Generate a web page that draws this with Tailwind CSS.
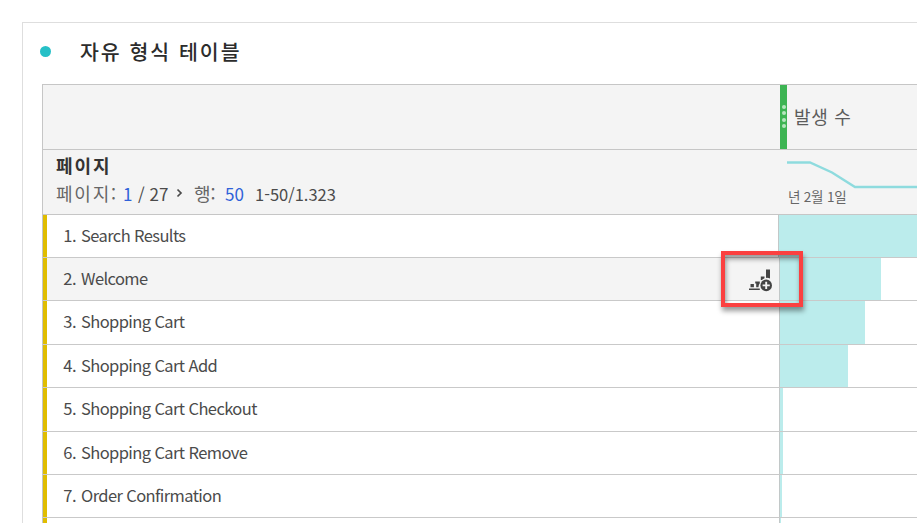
<!DOCTYPE html>
<html lang="ko">
<head>
<meta charset="utf-8">
<title>자유 형식 테이블</title>
<script src="https://cdn.jsdelivr.net/npm/@tailwindcss/browser@4"></script>
</head>
<body class="bg-white">
<div class="relative w-[917px] h-[523px] overflow-hidden pl-[22px] pt-[22px] font-['Noto_Sans_CJK_KR',sans-serif] text-[#4b4b4b]">
  <main class="h-[520px] border-l border-t border-[#dedede] pl-[19px]">
    <header class="flex h-[61px] items-center pb-[4px]">
      <span class="-ml-[2px] size-[11px] rounded-full bg-[#26c0c7]"></span>
      <h1 class="ml-[29px] pb-px whitespace-nowrap text-[20.5px] leading-none font-medium tracking-[2px] text-[#2c2c2c]">자유 형식 테이블</h1>
    </header>
    <section class="border-l border-t border-[#c6c6c6]">
      <div class="flex h-[65px] border-b border-[#c6c6c6] bg-[#f4f4f4]">
        <div class="w-[737px]"></div>
        <div class="flex w-[7px] flex-col items-center justify-center gap-[2.5px] bg-[#3db453] pb-px">
          <i class="size-[4px] rounded-full bg-[#b5e6be]"></i><i class="size-[4px] rounded-full bg-[#b5e6be]"></i><i class="size-[4px] rounded-full bg-[#b5e6be]"></i><i class="size-[4px] rounded-full bg-[#b5e6be]"></i>
        </div>
        <div class="flex items-center pl-[7px] pb-[3px] whitespace-nowrap text-[18px] leading-none tracking-[0.7px] text-[#5c5c5c]">발생 수</div>
      </div>
      <div class="flex h-[65px] border-b border-[#c6c6c6] bg-[#f4f4f4]">
        <div class="w-[744px] pl-[13px] pt-[5px] whitespace-nowrap">
          <div class="h-[22px] text-[18px] leading-[20px] font-bold tracking-[1.9px] text-[#333]">페이지</div>
          <div class="flex h-[32px] items-center text-[17px] leading-none">
            <span class="w-[67px] text-[18px] tracking-[1.8px] text-[#666]">페이지:</span>
            <span class="w-[15px] text-[#2f62d9]">1</span>
            <span class="w-[38px] pt-px">/ 27</span>
            <svg class="mr-[11px] mb-px h-[10px] w-[7px]" viewBox="0 0 7 10" fill="none" stroke="#4b4b4b" stroke-width="1.7"><path d="M1.5 1.5 5 5 1.5 8.5"/></svg>
            <span class="w-[31px] text-[18px] text-[#666]">행:</span>
            <span class="w-[30px] text-[#2f62d9]">50</span>
            <span class="pt-[2px] text-[16.5px]">1-50/1.323</span>
          </div>
        </div>
        <div class="w-[130px] pt-[9px]">
          <svg class="block h-[30px] w-[130px]" viewBox="0 0 130 30" fill="none" stroke="#8edbde" stroke-width="2.4"><path d="M0 3.5H23L45 13.5 68 28H130"/></svg>
          <div class="pl-px whitespace-nowrap text-[13.5px] leading-[14px] tracking-[-0.2px] text-[#666]">년 2월 1일</div>
        </div>
      </div>
      <div id="rows" class="text-[16.5px] leading-none"></div>
    </section>
  </main>
  <div class="absolute left-[721px] top-[251px] h-[56px] w-[82px] border-[4px] border-[#fb4040] shadow-[1px_4px_5px_rgba(0,0,0,0.4),inset_1px_4px_5px_rgba(0,0,0,0.4)]"></div>
</div>
<script>
  const icon = `<svg class="mr-[7px] mt-[2px] h-[24px] w-[24px]" viewBox="0 0 24 24" fill="#444">
    <path d="M1 20.4h10.8v1.5H1zM2.5 16h3.4v3.2H2.5zM7.2 13.5h4.6v1.7a6.6 6.6 0 0 0-1.3 4H8.2v-3.6h-1zM12.8 8.6h3.7v1.6L13.8 12h-1zM18 1.6h4v8.9a8 8 0 0 0-4-.6z"/>
    <circle cx="18.2" cy="17.4" r="5.8"/><path d="M18.2 13.8V21M14.6 17.4h7.2" stroke="#f4f4f4" stroke-width="1.9"/></svg>`;
  const data = [
    ['Search Results', 43, 138], ['Welcome', 43, 101], ['Shopping Cart', 44, 85],
    ['Shopping Cart Add', 43, 68], ['Shopping Cart Checkout', 44, 3],
    ['Shopping Cart Remove', 43, 3], ['Order Confirmation', 43, 2], ['', 44, 1]
  ];
  document.getElementById('rows').innerHTML = data.map(([name, height, bar], i) => `
    <div class="flex border-b border-[#c9c9c9]" style="height:${height}px">
      <div class="flex w-[736px] items-center border-l-[4px] border-[#e0bd00] ${i === 1 ? 'bg-[#f4f4f4]' : ''}">
        <span class="w-[29px] pb-[2px] text-right tracking-[-0.5px]">${name ? i + 1 + '.' : ''}</span>
        <span class="ml-[5px] flex-1 pb-[2px] whitespace-nowrap tracking-[-0.6px]">${name}</span>${i === 1 ? icon : ''}
      </div>
      <div class="flex-1 border-l border-[#c2c8c8]"><div class="h-full bg-[#bbecec]" style="width:${bar}px"></div></div>
    </div>`).join('');
</script>
</body>
</html>
